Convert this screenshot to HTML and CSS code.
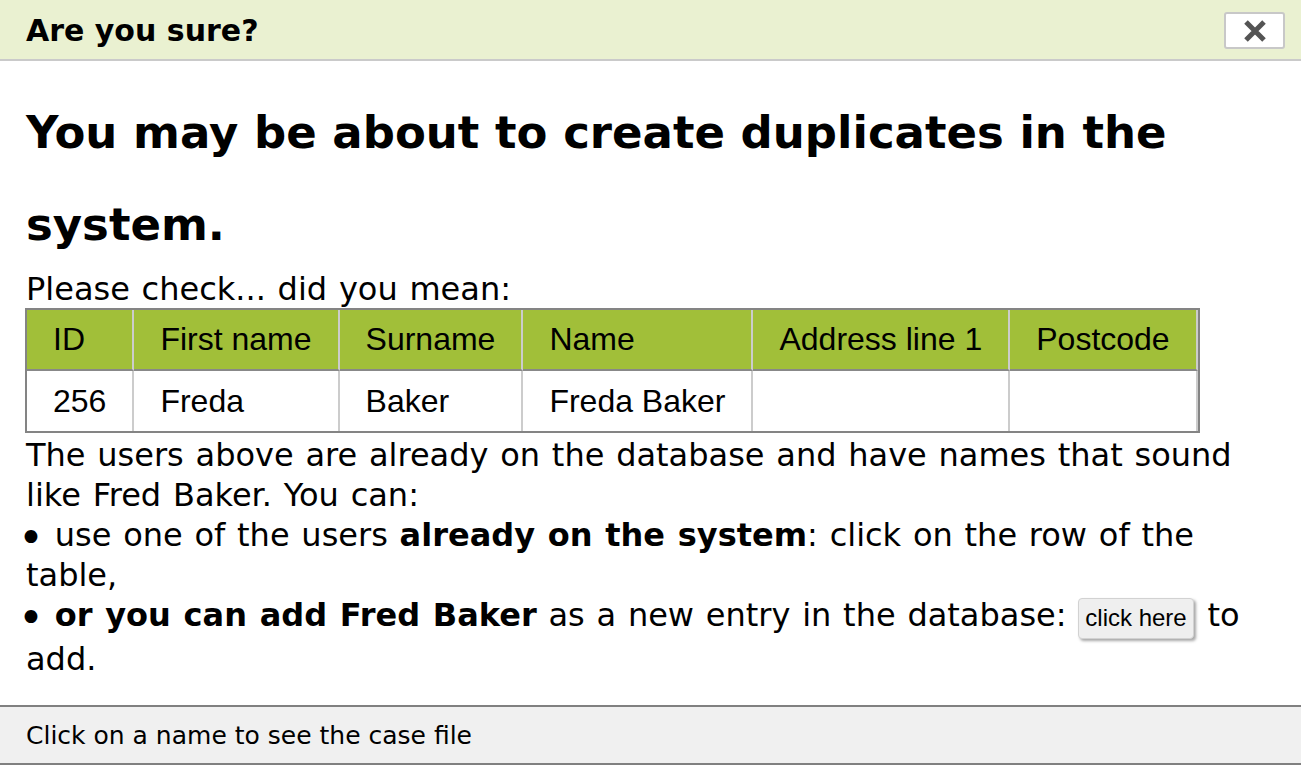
FILE: index.html
```html
<!DOCTYPE html>
<html lang="en">
<head>
<meta charset="utf-8">
<title>Are you sure?</title>
<link rel="stylesheet" href="styles.css">
</head>
<body>
<div class="dialog">
  <div class="dialog-header">
    <h2 class="dialog-title">Are you sure?</h2>
    <button class="close-btn" type="button" aria-label="Close">
      <svg width="22" height="22" viewBox="0 0 22 22"><path d="M2 2 L20 20 M20 2 L2 20" stroke="#545454" stroke-width="5" stroke-linecap="butt" fill="none"/></svg>
    </button>
  </div>
  <div class="dialog-body">
    <h1 class="warning">You may be about to create duplicates in the system.</h1>
    <p class="text lead">Please check... did you mean:</p>
    <table class="matches">
      <thead>
        <tr><th>ID</th><th>First name</th><th>Surname</th><th>Name</th><th>Address line 1</th><th>Postcode</th></tr>
      </thead>
      <tbody>
        <tr><td>256</td><td>Freda</td><td>Baker</td><td>Freda Baker</td><td></td><td></td></tr>
      </tbody>
    </table>
    <p class="text info">The users above are already on the database and have names that sound like Fred Baker. You can:<br><span class="bullet">&bull;</span> use one of the users <b>already on the system</b>: click on the row of the table,<br><span class="bullet">&bull;</span> <b>or you can add Fred Baker</b> as a new entry in the database: <button class="add-btn" type="button">click here</button> to add.</p>
  </div>
  <div class="dialog-footer">Click on a name to see the case file</div>
</div>
</body>
</html>
```
FILE: styles.css
```css
html, body {
  margin: 0;
  padding: 0;
  background: #ffffff;
}
body {
  font-family: "DejaVu Sans", Verdana, sans-serif;
  color: #000;
}
.dialog {
  display: flex;
  flex-direction: column;
}
.dialog-header {
  height: 59px;
  display: flex;
  align-items: center;
  justify-content: space-between;
  padding: 0 16px 0 26px;
  background: #eaf1d1;
  border-bottom: 2px solid #cacaca;
}
.dialog-title {
  margin: 0;
  font-size: 30px;
  line-height: 36px;
  font-weight: bold;
  padding-top: 2px;
}
.close-btn {
  width: 61px;
  height: 37px;
  margin-top: 2px;
  background: #fff;
  border: 2px solid #c8c8c8;
  border-radius: 3px;
  display: flex;
  align-items: center;
  justify-content: center;
  padding: 0;
}
.dialog-body {
  padding: 26px 26px 26px 26px;
}
.warning {
  margin: 0;
  font-size: 45px;
  line-height: 92px;
  font-weight: bold;
}
.text {
  margin: 0;
  font-size: 32px;
  line-height: 40px;
  word-spacing: 1.6px;
}
.lead {
  line-height: 37px;
}
.info {
  padding-top: 2px;
}
.bullet {
  display: inline-block;
  font-size: 44px;
  line-height: 0;
  margin-left: -8px;
  margin-right: -1px;
  vertical-align: -7px;
}
.matches {
  border-collapse: separate;
  border-spacing: 0;
  border: 2px solid #848484;
  margin-left: -1px;
  font-family: "Liberation Sans", Arial, sans-serif;
  font-size: 32px;
}
.matches th, .matches td {
  padding: 11px 26px;
  line-height: 37px;
  text-align: left;
  border-right: 2px solid #cccccc;
  font-weight: normal;
}
.matches th {
  background: #a1bf39;
  border-bottom: 2px solid #888888;
}
.matches td {
  height: 38px;
}
.add-btn {
  font-family: "Liberation Sans", Arial, sans-serif;
  font-size: 24px;
  line-height: 28px;
  padding: 5px 6px 6px;
  margin: 0 2px 0 0;
  background: #efefef;
  border: 1px solid #d2d2d2;
  border-radius: 4px;
  box-shadow: 2px 2px 3px rgba(0, 0, 0, 0.35);
  color: #000;
}
.dialog-footer {
  border-top: 2px solid #808080;
  border-bottom: 2px solid #808080;
  background: #f0f0f0;
  font-size: 25px;
  line-height: 30px;
  padding: 14px 26px 12px;
}
```
